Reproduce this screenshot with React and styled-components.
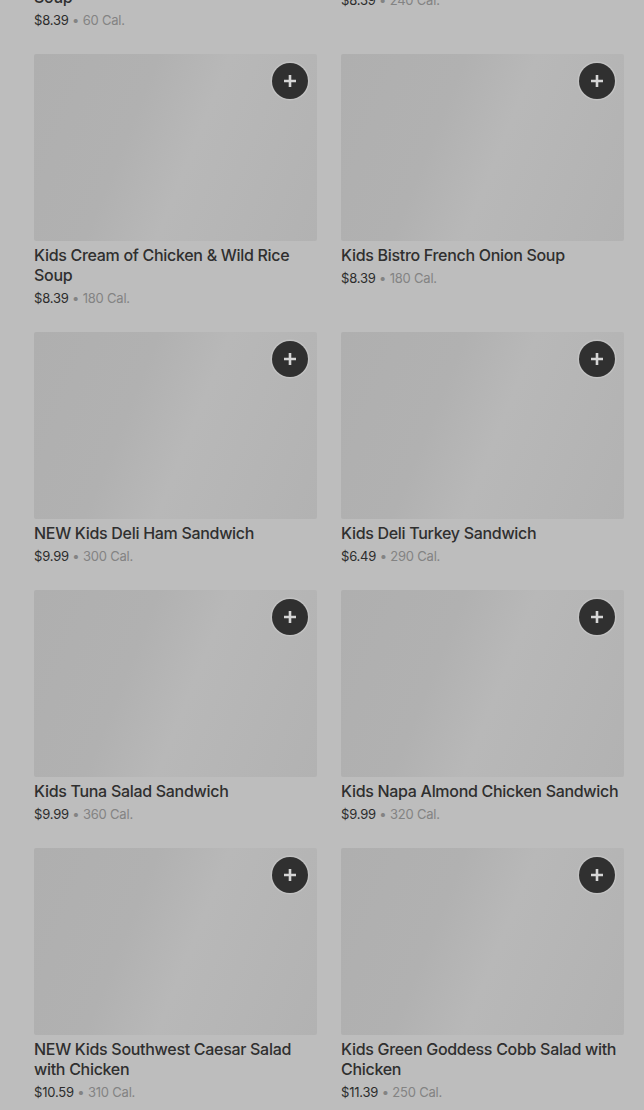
import styled, { createGlobalStyle } from 'styled-components';

const GlobalStyle = createGlobalStyle`
  html, body {
    margin: 0;
    padding: 0;
    background: #bdbdbd;
    overflow: hidden;
  }
  body {
    font-family: Inter, "Noto Sans", "Liberation Sans", sans-serif;
    -webkit-font-smoothing: antialiased;
  }
`

const Page = styled.div`
  width: 644px;
  height: 1110px;
  overflow: hidden;
  background: #bdbdbd;
`

const Grid = styled.div`
  display: grid;
  grid-template-columns: 283px 283px;
  column-gap: 24px;
  row-gap: 24px;
  align-items: start;
  padding-left: 34px;
  margin-top: -224px;
`

const Card = styled.div`
  display: flex;
  flex-direction: column;
`

const Thumb = styled.div`
  position: relative;
  height: 187px;
  border-radius: 2px;
  background: linear-gradient(112deg, #afafaf 0%, #b1b1b1 35%, #b8b8b8 55%, #b6b6b6 70%, #b2b2b2 100%);
`

const AddButton = styled.button`
  position: absolute;
  top: 9px;
  right: 9px;
  width: 36px;
  height: 36px;
  border-radius: 50%;
  border: none;
  padding: 0;
  background: #303030;
  box-shadow: 0 0 0 1.5px #c2c2c2;
  display: flex;
  align-items: center;
  justify-content: center;
  cursor: pointer;
`

const Title = styled.div`
  margin-top: 4px;
  font-size: 16px;
  line-height: 20px;
  font-weight: 500;
  letter-spacing: -0.3px;
  color: #2f2f2f;
`

const Meta = styled.div`
  margin-top: 3px;
  font-size: 13px;
  line-height: 20px;
  letter-spacing: -0.2px;
  color: #2c2c2c;
`

const Cal = styled.span`
  color: #838383;
`

const items = [
  { title: 'Kids Creamy Tomato Basil Bisque Soup', price: '$8.39', cal: '60 Cal.' },
  { title: 'Kids Broccoli Cheddar Soup', price: '$8.39', cal: '240 Cal.' },
  { title: 'Kids Cream of Chicken & Wild Rice Soup', price: '$8.39', cal: '180 Cal.' },
  { title: 'Kids Bistro French Onion Soup', price: '$8.39', cal: '180 Cal.' },
  { title: 'NEW Kids Deli Ham Sandwich', price: '$9.99', cal: '300 Cal.' },
  { title: 'Kids Deli Turkey Sandwich', price: '$6.49', cal: '290 Cal.' },
  { title: 'Kids Tuna Salad Sandwich', price: '$9.99', cal: '360 Cal.' },
  { title: 'Kids Napa Almond Chicken Sandwich', price: '$9.99', cal: '320 Cal.' },
  { title: 'NEW Kids Southwest Caesar Salad with Chicken', price: '$10.59', cal: '310 Cal.' },
  { title: 'Kids Green Goddess Cobb Salad with Chicken', price: '$11.39', cal: '250 Cal.' },
]

const Plus = () => (
  <svg width="14" height="14" viewBox="0 0 14 14">
    <path d="M7 1v12M1 7h12" stroke="#d6d6d6" strokeWidth="2.6" />
  </svg>
)

const App = () => {
  return (
    <Page>
      <GlobalStyle />
      <Grid>
        {items.map((item) => (
          <Card key={item.title}>
            <Thumb>
              <AddButton aria-label="Add">
                <Plus />
              </AddButton>
            </Thumb>
            <Title>{item.title}</Title>
            <Meta>
              {item.price} <Cal>• {item.cal}</Cal>
            </Meta>
          </Card>
        ))}
      </Grid>
    </Page>
  )
}

export default App
